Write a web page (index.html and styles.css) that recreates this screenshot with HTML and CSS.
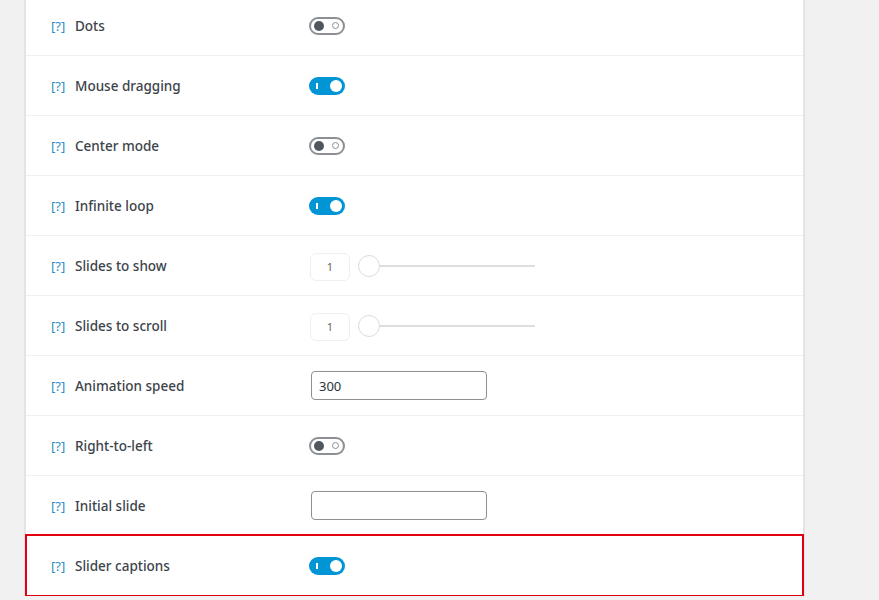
FILE: index.html
```html
<!DOCTYPE html>
<html>
<head>
<meta charset="utf-8">
<link rel="stylesheet" href="styles.css">
</head>
<body>
<div class="page">
  <div class="panel">
    <div class="row first">
      <div class="label"><span class="help">[?]</span><span class="name">Dots</span></div>
      <div class="control"><span class="toggle off"><span class="knob"></span><span class="ring"></span></span></div>
    </div>
    <div class="row">
      <div class="label"><span class="help">[?]</span><span class="name">Mouse dragging</span></div>
      <div class="control"><span class="toggle on"><span class="bar"></span><span class="knob"></span></span></div>
    </div>
    <div class="row">
      <div class="label"><span class="help">[?]</span><span class="name">Center mode</span></div>
      <div class="control"><span class="toggle off"><span class="knob"></span><span class="ring"></span></span></div>
    </div>
    <div class="row">
      <div class="label"><span class="help">[?]</span><span class="name">Infinite loop</span></div>
      <div class="control"><span class="toggle on"><span class="bar"></span><span class="knob"></span></span></div>
    </div>
    <div class="row">
      <div class="label"><span class="help">[?]</span><span class="name">Slides to show</span></div>
      <div class="control slider"><span class="num">1</span><span class="thumb"></span><span class="track"></span></div>
    </div>
    <div class="row">
      <div class="label"><span class="help">[?]</span><span class="name">Slides to scroll</span></div>
      <div class="control slider"><span class="num">1</span><span class="thumb"></span><span class="track"></span></div>
    </div>
    <div class="row">
      <div class="label"><span class="help">[?]</span><span class="name">Animation speed</span></div>
      <div class="control"><span class="text-input">300</span></div>
    </div>
    <div class="row">
      <div class="label"><span class="help">[?]</span><span class="name">Right-to-left</span></div>
      <div class="control"><span class="toggle off"><span class="knob"></span><span class="ring"></span></span></div>
    </div>
    <div class="row">
      <div class="label"><span class="help">[?]</span><span class="name">Initial slide</span></div>
      <div class="control"><span class="text-input"></span></div>
    </div>
    <div class="row highlight">
      <div class="label"><span class="help">[?]</span><span class="name">Slider captions</span></div>
      <div class="control"><span class="toggle on"><span class="bar"></span><span class="knob"></span></span></div>
    </div>
  </div>
</div>
</body>
</html>
```

FILE: styles.css
```css
html, body {
  margin: 0;
  padding: 0;
  background: #f1f1f1;
  font-family: "Noto Sans", "Open Sans", sans-serif;
  overflow: hidden;
}
.page {
  height: 600px;
  padding-left: 24px;
}
.panel {
  width: 777px;
  background: #fff;
  border-left: 2px solid #e4e4e4;
  border-right: 2px solid #e4e4e4;
  margin-top: -4px;
}
.row {
  height: 59px;
  border-bottom: 1px solid #f0f0f0;
  display: flex;
  align-items: center;
}
.label {
  width: 258px;
  padding-left: 25px;
  display: flex;
  align-items: center;
  font-size: 13.5px;
  color: #3c434a;
}
.help {
  color: #2e8ec6;
  font-size: 13px;
  width: 24px;
}
.name {
  font-weight: 500;
}
.control {
  display: flex;
  align-items: center;
}
.toggle {
  box-sizing: border-box;
  width: 36px;
  height: 18px;
  border-radius: 9px;
  display: flex;
  align-items: center;
  justify-content: space-between;
}
.toggle.off {
  border: 2px solid #8c8f94;
  padding: 0 4px 0 3px;
}
.toggle.off .knob {
  width: 10px;
  height: 10px;
  border-radius: 50%;
  background: #50575e;
}
.toggle.off .ring {
  box-sizing: border-box;
  width: 7px;
  height: 7px;
  border-radius: 50%;
  border: 1.5px solid #8c8f94;
}
.toggle.on {
  background: #0096d6;
  padding: 0 3px 0 7px;
}
.toggle.on .bar {
  width: 2px;
  height: 6px;
  background: #fff;
}
.toggle.on .knob {
  width: 12px;
  height: 12px;
  border-radius: 50%;
  background: #fff;
}
.slider .num {
  box-sizing: border-box;
  width: 40px;
  height: 28px;
  border: 1px solid #f0f0f0;
  border-radius: 6px;
  display: flex;
  align-items: center;
  justify-content: center;
  font-size: 11px;
  color: #666;
  margin-left: 1px;
  margin-top: 2px;
}
.slider .thumb {
  box-sizing: border-box;
  width: 22px;
  height: 22px;
  border-radius: 50%;
  border: 1px solid #dcdcdc;
  background: #fff;
  margin-left: 8px;
}
.slider .track {
  width: 155px;
  height: 2px;
  background: #dedede;
}
.text-input {
  box-sizing: border-box;
  width: 176px;
  height: 29px;
  border: 1px solid #8c8f94;
  border-radius: 4px;
  display: flex;
  align-items: center;
  padding-left: 7px;
  font-size: 13px;
  color: #2c3338;
  margin-left: 2px;
}
.row.highlight {
  height: 59px;
  border: 2px solid #e3000f;
  margin: -2px -1px 0 -1px;
}
.row.highlight .label {
  padding-left: 24px;
}
```
